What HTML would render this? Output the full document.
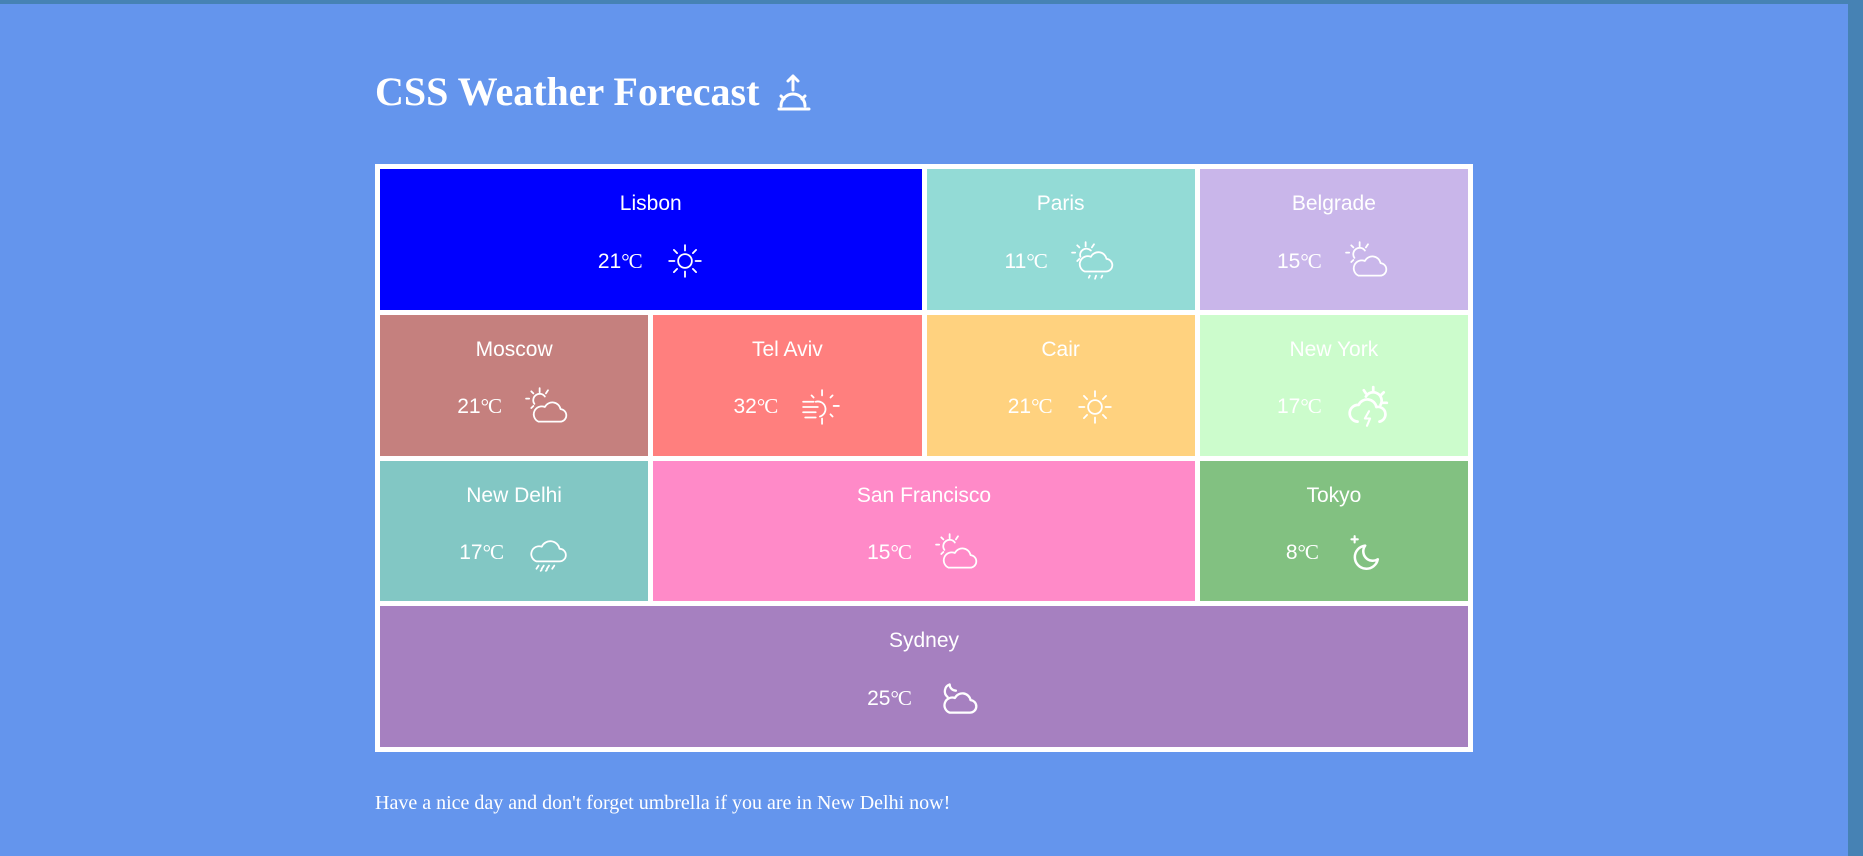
<!DOCTYPE html>
<html><head><meta charset="utf-8"><style>
html,body{margin:0;padding:0;}
body{width:1863px;height:856px;background:#6495ed;position:relative;overflow:hidden;font-family:"Liberation Sans",Arial,sans-serif;color:#fff;}
.topbar{position:absolute;left:0;top:0;width:1863px;height:4px;background:#4682b4;}
.rightbar{position:absolute;right:0;top:0;width:15px;height:856px;background:#4682b4;}
h1{position:absolute;left:375px;top:70px;margin:0;font:bold 40px "Liberation Serif",serif;line-height:44px;white-space:nowrap;}
.ticon{position:absolute;left:776px;top:72px;}
.grid{position:absolute;left:375px;top:164px;width:1088px;height:578px;padding:5px;background:#fff;display:grid;grid-template-columns:repeat(4,1fr);grid-template-rows:repeat(4,1fr);gap:5px;}
.c{position:relative;}
.n{position:absolute;left:0;right:0;top:23px;text-align:center;font-size:21px;line-height:24px;}
.t{position:absolute;left:0;right:0;top:73px;height:38px;display:flex;justify-content:center;align-items:center;}
.t span{font-size:21px;}
.t span i{font-style:normal;font-family:"Liberation Serif",serif;font-size:21px;letter-spacing:-1px;}
.t svg{margin-left:24px;}
.f{position:absolute;left:375px;top:792px;font:20px "Liberation Serif",serif;white-space:nowrap;}
svg{fill:none;stroke:#fff;stroke-width:1.7;stroke-linecap:round;stroke-linejoin:round;}
</style></head><body>
<div class="topbar"></div><div class="rightbar"></div>
<h1>CSS Weather Forecast</h1>
<svg class="ticon" width="36" height="40" viewBox="0 0 36 40"><path d="M17 4v14M12 9l5-5 5 5" stroke-width="3"/><path d="M5 34a12 12 0 0 1 24 0" stroke-width="3"/><path d="M3 37h30M5 24l3 3M29 24l-3 3" stroke-width="3"/></svg>

<div class="grid">
<div class="c" style="grid-column:1/3;background:#0000ff"><div class="n">Lisbon</div><div class="t"><span>21<i>°C</i></span><svg width="38" height="38" viewBox="0 0 36 36"><circle cx="18" cy="18" r="6.5"/><path d="M18 3v5M18 28v5M3 18h5M28 18h5M7.5 7.5l3 3M25.5 25.5l3 3M28.5 7.5l-3 3M10.5 25.5l-3 3"/></svg></div></div>
<div class="c" style="background:#93dbd6"><div class="n">Paris</div><div class="t"><span>11<i>°C</i></span><svg width="46" height="42" viewBox="0 0 44 40"><path d="M9 16a6 6 0 0 1 10-6"/><path d="M14 2v4M4 12H1M6 5l2 2M22 4l-2 3M6 20l2-2"/><path d="M13 30h20a6 6 0 0 0 1-12a8 8 0 0 0-15-2a7 7 0 0 0-6 14z"/><path d="M18 34l-1 2M24 34l-1 3M30 34l-1 2"/></svg></div></div>
<div class="c" style="background:#c9b6ea"><div class="n">Belgrade</div><div class="t"><span>15<i>°C</i></span><svg width="46" height="42" viewBox="0 0 44 40"><path d="M9 17a6 6 0 0 1 10-7"/><path d="M14 2v4M4 12H1M6 5l2 2M22 4l-2 3M6 21l2-2"/><path d="M13 34h20a6 6 0 0 0 1-12a8 8 0 0 0-15-2a7 7 0 0 0-6 14z"/></svg></div></div>

<div class="c" style="background:#c5807e"><div class="n">Moscow</div><div class="t"><span>21<i>°C</i></span><svg width="46" height="42" viewBox="0 0 44 40"><path d="M9 17a6 6 0 0 1 10-7"/><path d="M14 2v4M4 12H1M6 5l2 2M22 4l-2 3M6 21l2-2"/><path d="M13 34h20a6 6 0 0 0 1-12a8 8 0 0 0-15-2a7 7 0 0 0-6 14z"/></svg></div></div>
<div class="c" style="background:#ff7f7e"><div class="n">Tel Aviv</div><div class="t"><span>32<i>°C</i></span><svg width="40" height="40" viewBox="0 0 38 38"><path d="M14 14a7 7 0 1 1 4 14"/><path d="M20 3v5M20 30v5M31 18h5M10 8l2 2M30 8l-2 2M30 28l-2-2M2 14h10M2 19h14M2 24h12M4 29h10"/></svg></div></div>
<div class="c" style="background:#ffd27f"><div class="n">Cair</div><div class="t"><span>21<i>°C</i></span><svg width="38" height="38" viewBox="0 0 36 36"><circle cx="18" cy="18" r="6.5"/><path d="M18 3v5M18 28v5M3 18h5M28 18h5M7.5 7.5l3 3M25.5 25.5l3 3M28.5 7.5l-3 3M10.5 25.5l-3 3"/></svg></div></div>
<div class="c" style="background:#ccfccc"><div class="n">New York</div><div class="t"><span>17<i>°C</i></span><svg width="46" height="46" viewBox="0 0 44 44" style="stroke-width:2.6"><path d="M20 12a8 8 0 0 1 14 8"/><path d="M27 3v4M37 8l-3 3M40 18h-4M18 6l2 3"/><path d="M12 36a8 8 0 0 1 1-16a9 9 0 0 1 17 2a7 7 0 0 1 3 14"/><path d="M23 26l-4 7h5l-3 7" stroke-width="2"/></svg></div></div>

<div class="c" style="background:#82c7c4"><div class="n">New Delhi</div><div class="t"><span>17<i>°C</i></span><svg width="42" height="42" viewBox="0 0 40 40"><path d="M9 28h22a6 6 0 0 0 0-12a9 9 0 0 0-17-2a7 7 0 0 0-5 14z"/><path d="M11 32l-2 3M16 32l-2 3M21 32l-2 3M26 32l-2 3M14 36l-1 1M19 36l-1 1"/></svg></div></div>
<div class="c" style="grid-column:2/4;background:#ff8ac8"><div class="n">San Francisco</div><div class="t"><span>15<i>°C</i></span><svg width="46" height="42" viewBox="0 0 44 40"><path d="M9 17a6 6 0 0 1 10-7"/><path d="M14 2v4M4 12H1M6 5l2 2M22 4l-2 3M6 21l2-2"/><path d="M13 34h20a6 6 0 0 0 1-12a8 8 0 0 0-15-2a7 7 0 0 0-6 14z"/></svg></div></div>
<div class="c" style="background:#82c181"><div class="n">Tokyo</div><div class="t"><span>8<i>°C</i></span><svg width="40" height="40" viewBox="0 0 38 38" style="stroke-width:2.4"><path d="M22 12a11 11 0 1 0 12 13a9 9 0 0 1-12-13z"/><path d="M12 3v6M9 6h6" stroke-width="2"/></svg></div></div>

<div class="c" style="grid-column:1/5;background:#a680c0"><div class="n">Sydney</div><div class="t"><span>25<i>°C</i></span><svg width="46" height="42" viewBox="0 0 44 40" style="stroke-width:2.2"><path d="M12 19a7 7 0 0 1 2-12a6 6 0 0 0 6 6"/><path d="M14 34h19a6 6 0 0 0 1-12a8 8 0 0 0-15-2a7 7 0 0 0-5 14z"/></svg></div></div>
</div>

<div class="f">Have a nice day and don't forget umbrella if you are in New Delhi now!</div>
</body></html>
